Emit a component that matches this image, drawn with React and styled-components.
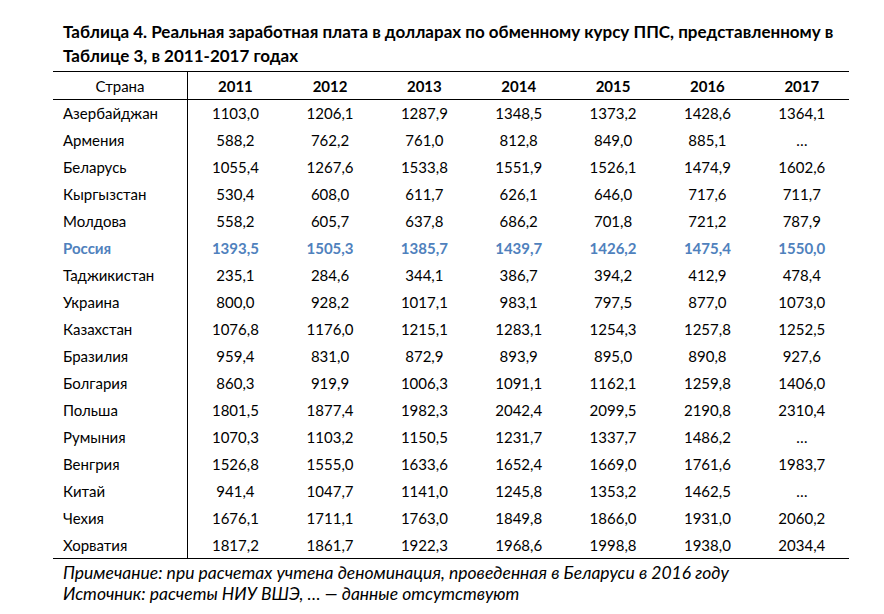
import React from 'react'
import styled, { createGlobalStyle } from 'styled-components'

const years = ['2011', '2012', '2013', '2014', '2015', '2016', '2017']

const rows = [
  ['Азербайджан', '1103,0', '1206,1', '1287,9', '1348,5', '1373,2', '1428,6', '1364,1'],
  ['Армения', '588,2', '762,2', '761,0', '812,8', '849,0', '885,1', '…'],
  ['Беларусь', '1055,4', '1267,6', '1533,8', '1551,9', '1526,1', '1474,9', '1602,6'],
  ['Кыргызстан', '530,4', '608,0', '611,7', '626,1', '646,0', '717,6', '711,7'],
  ['Молдова', '558,2', '605,7', '637,8', '686,2', '701,8', '721,2', '787,9'],
  ['Россия', '1393,5', '1505,3', '1385,7', '1439,7', '1426,2', '1475,4', '1550,0'],
  ['Таджикистан', '235,1', '284,6', '344,1', '386,7', '394,2', '412,9', '478,4'],
  ['Украина', '800,0', '928,2', '1017,1', '983,1', '797,5', '877,0', '1073,0'],
  ['Казахстан', '1076,8', '1176,0', '1215,1', '1283,1', '1254,3', '1257,8', '1252,5'],
  ['Бразилия', '959,4', '831,0', '872,9', '893,9', '895,0', '890,8', '927,6'],
  ['Болгария', '860,3', '919,9', '1006,3', '1091,1', '1162,1', '1259,8', '1406,0'],
  ['Польша', '1801,5', '1877,4', '1982,3', '2042,4', '2099,5', '2190,8', '2310,4'],
  ['Румыния', '1070,3', '1103,2', '1150,5', '1231,7', '1337,7', '1486,2', '…'],
  ['Венгрия', '1526,8', '1555,0', '1633,6', '1652,4', '1669,0', '1761,6', '1983,7'],
  ['Китай', '941,4', '1047,7', '1141,0', '1245,8', '1353,2', '1462,5', '…'],
  ['Чехия', '1676,1', '1711,1', '1763,0', '1849,8', '1866,0', '1931,0', '2060,2'],
  ['Хорватия', '1817,2', '1861,7', '1922,3', '1968,6', '1998,8', '1938,0', '2034,4'],
]

export default function App() {
  return (
    <>
      <GlobalStyle />
      <Page>
        <Title>
          Таблица 4. Реальная заработная плата в долларах по обменному курсу ППС, представленному в Таблице 3, в 2011-2017 годах
        </Title>
        <Table>
          <thead>
            <tr>
              <Head first>Страна</Head>
              {years.map(y => <Head key={y} bold>{y}</Head>)}
            </tr>
          </thead>
          <tbody>
            {rows.map(r => {
              const hl = r[0] === 'Россия'
              return (
                <Row key={r[0]} highlight={hl}>
                  <Name>{r[0]}</Name>
                  {r.slice(1).map((v, i) => <Cell key={i}>{v}</Cell>)}
                </Row>
              )
            })}
          </tbody>
        </Table>
        <Notes>
          <div>Примечание: при расчетах учтена деноминация, проведенная в Беларуси в 2016 году</div>
          <div>Источник: расчеты НИУ ВШЭ, … — данные отсутствуют</div>
        </Notes>
      </Page>
    </>
  )
}

// Styles
const GlobalStyle = createGlobalStyle`
  body { margin:0; background:#fff; color:#000; font-family:Lato, "Open Sans", sans-serif; }
`

const Page = styled.div` padding:20px 35px 0 53px; width:796px; `
  const Title = styled.div` font-weight:700; font-size:17px; line-height:24px; padding-left:10px; `
  const Table = styled.table` width:796px; border-collapse:collapse; margin-top:3px; font-size:15px; border-bottom:1px solid #000; `
  const Head = styled.th`
    height:27px; padding:0; text-align:center; font-weight:${p => p.bold ? 700 : 400};
    border-top:1px solid #000; border-bottom:1px solid #000;
    ${p => p.first && 'width:134px; border-right:1px solid #000;'}
  `
  const Row = styled.tr` height:27px; ${p => p.highlight && 'color:#4f81bd; font-weight:700;'} `
  const Name = styled.td` padding:0 0 0 10px; border-right:1px solid #000; white-space:nowrap; `
  const Cell = styled.td` padding:0; text-align:center; `
  const Notes = styled.div` font-style:italic; font-size:17.5px; line-height:21px; padding:3px 0 0 10px; `
